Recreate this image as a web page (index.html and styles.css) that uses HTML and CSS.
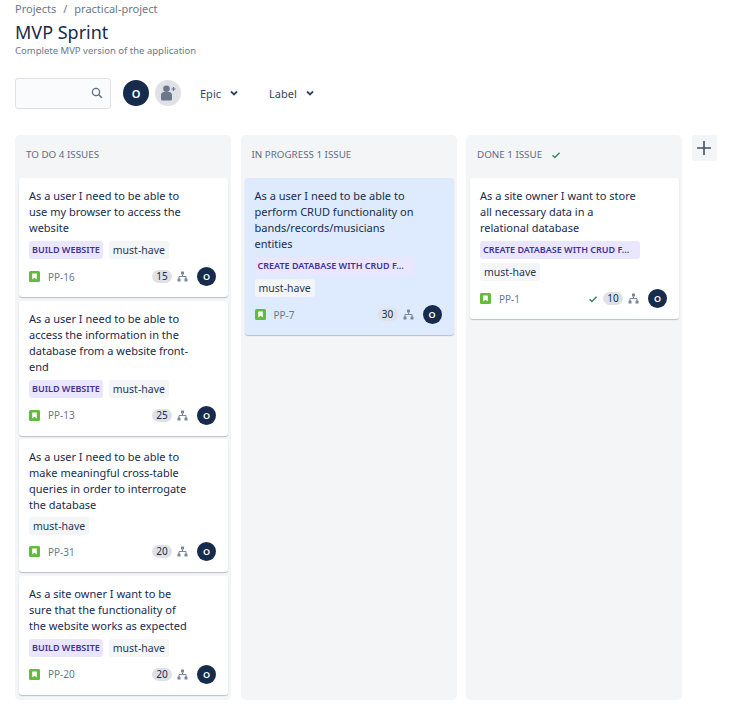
FILE: index.html
```html
<!DOCTYPE html>
<html lang="en">
<head>
    <meta charset="UTF-8">
    <meta name="viewport" content="width=device-width, initial-scale=1.0">
    <title>MVP Sprint</title>
    <link rel="stylesheet" href="styles.css">
</head>
<body>
    <svg class="defs" width="0" height="0">
        <symbol id="story" viewBox="0 0 11 11">
            <rect width="11" height="11" rx="1.5" fill="#63ba3c"/>
            <path d="M3.2 2.5h4.6v6L5.5 6.8 3.2 8.5z" fill="#fff"/>
        </symbol>
        <symbol id="tree" viewBox="0 0 11 11">
            <path d="M5.5 3.5v2M2 8V5.5h7V8" fill="none" stroke="#7a869a" stroke-width="1"/>
            <rect x="4" y="0.5" width="3" height="3" rx="0.5" fill="#7a869a"/>
            <rect x="0.5" y="7.5" width="3" height="3" rx="0.5" fill="#7a869a"/>
            <rect x="7.5" y="7.5" width="3" height="3" rx="0.5" fill="#7a869a"/>
        </symbol>
        <symbol id="tick" viewBox="0 0 10 10">
            <path d="M1.5 5.2l2.4 2.3 4.6-4.8" fill="none" stroke="#36865f" stroke-width="1.4"/>
        </symbol>
        <symbol id="chevron" viewBox="0 0 10 10">
            <path d="M2 3.5l3 3 3-3" fill="none" stroke="#344563" stroke-width="1.8"/>
        </symbol>
    </svg>

    <div class="breadcrumbs"><span>Projects</span><span class="slash">/</span><span>practical-project</span></div>
    <h1>MVP Sprint</h1>
    <p class="subtitle">Complete MVP version of the application</p>

    <div class="toolbar">
        <div class="search">
            <svg width="12" height="12" viewBox="0 0 12 12"><circle cx="5" cy="5" r="3.6" fill="none" stroke="#5e6c84" stroke-width="1.3"/><path d="M7.8 7.8l3 3" stroke="#5e6c84" stroke-width="1.5"/></svg>
        </div>
        <div class="avatar avatar-large">O</div>
        <div class="add-person">
            <svg width="16" height="16" viewBox="0 0 16 16">
                <circle cx="6.5" cy="3.8" r="3.3" fill="#6b778c"/>
                <path d="M1 10c0-2 1.500-3 3-3h5c1.500 0 3 1 3 3v4c0 1-.8 1.500-1.500 1.500h-8C1.800 15.500 1 15 1 14z" fill="#6b778c"/>
                <path d="M13.500 2v4M11.500 4h4" stroke="#6b778c" stroke-width="1.200"/>
            </svg>
        </div>
        <button class="filter filter-epic">Epic <svg width="10" height="10"><use href="#chevron"/></svg></button>
        <button class="filter">Label <svg width="10" height="10"><use href="#chevron"/></svg></button>
    </div>

    <div class="board">
        <section class="column">
            <h2 class="column-title">TO DO 4 ISSUES</h2>
            <div class="cards">
                <article class="card">
                    <p class="summary">As a user I need to be able to use my browser to access the website</p>
                    <div class="tags"><span class="tag epic">BUILD WEBSITE</span><span class="tag label">must-have</span></div>
                    <div class="card-foot">
                        <svg class="story" width="11" height="11"><use href="#story"/></svg><span class="key">PP-16</span>
                        <span class="points">15</span><svg class="tree" width="11" height="11"><use href="#tree"/></svg><span class="avatar">O</span>
                    </div>
                </article>
                <article class="card">
                    <p class="summary">As a user I need to be able to access the information in the database from a website front-end</p>
                    <div class="tags"><span class="tag epic">BUILD WEBSITE</span><span class="tag label">must-have</span></div>
                    <div class="card-foot">
                        <svg class="story" width="11" height="11"><use href="#story"/></svg><span class="key">PP-13</span>
                        <span class="points">25</span><svg class="tree" width="11" height="11"><use href="#tree"/></svg><span class="avatar">O</span>
                    </div>
                </article>
                <article class="card">
                    <p class="summary">As a user I need to be able to make meaningful cross-table queries in order to interrogate the database</p>
                    <div class="tags tags-single"><span class="tag label">must-have</span></div>
                    <div class="card-foot">
                        <svg class="story" width="11" height="11"><use href="#story"/></svg><span class="key">PP-31</span>
                        <span class="points">20</span><svg class="tree" width="11" height="11"><use href="#tree"/></svg><span class="avatar">O</span>
                    </div>
                </article>
                <article class="card">
                    <p class="summary">As a site owner I want to be sure that the functionality of the website works as expected</p>
                    <div class="tags"><span class="tag epic">BUILD WEBSITE</span><span class="tag label">must-have</span></div>
                    <div class="card-foot">
                        <svg class="story" width="11" height="11"><use href="#story"/></svg><span class="key">PP-20</span>
                        <span class="points">20</span><svg class="tree" width="11" height="11"><use href="#tree"/></svg><span class="avatar">O</span>
                    </div>
                </article>
            </div>
        </section>

        <section class="column">
            <h2 class="column-title">IN PROGRESS 1 ISSUE</h2>
            <div class="cards">
                <article class="card selected">
                    <p class="summary">As a user I need to be able to perform CRUD functionality on bands/records/musicians entities</p>
                    <div class="tags"><span class="tag epic epic-long">CREATE DATABASE WITH CRUD F...</span><span class="tag label">must-have</span></div>
                    <div class="card-foot">
                        <svg class="story" width="11" height="11"><use href="#story"/></svg><span class="key">PP-7</span>
                        <span class="points">30</span><svg class="tree" width="11" height="11"><use href="#tree"/></svg><span class="avatar">O</span>
                    </div>
                </article>
            </div>
        </section>

        <section class="column">
            <h2 class="column-title">DONE 1 ISSUE <svg class="title-tick" width="10" height="10"><use href="#tick"/></svg></h2>
            <div class="cards">
                <article class="card">
                    <p class="summary">As a site owner I want to store all necessary data in a relational database</p>
                    <div class="tags"><span class="tag epic epic-long">CREATE DATABASE WITH CRUD F...</span><span class="tag label">must-have</span></div>
                    <div class="card-foot">
                        <svg class="story" width="11" height="11"><use href="#story"/></svg><span class="key">PP-1</span>
                        <svg class="foot-tick" width="10" height="10"><use href="#tick"/></svg><span class="points points-done">10</span><svg class="tree" width="11" height="11"><use href="#tree"/></svg><span class="avatar">O</span>
                    </div>
                </article>
            </div>
        </section>

        <button class="add-column" aria-label="Add column">
            <svg width="16" height="16" viewBox="0 0 16 16"><path d="M8 1v14M1 8h14" stroke="#42526e" stroke-width="1.600"/></svg>
        </button>
    </div>
</body>
</html>
```

FILE: styles.css
```css
body {
    font-family: "Noto Sans", Arial, sans-serif;
    font-size: 11px;
    color: #172b4d;
    margin: 0;
    padding: 0 15px;
    background-color: white;
    height: 719px;
    overflow: hidden;
    box-sizing: border-box;
}
.defs {
    display: block;
}
.breadcrumbs {
    display: flex;
    gap: 7px;
    height: 18px;
    line-height: 18px;
    color: #6b778c;
    font-size: 11px;
}
h1 {
    font-size: 18px;
    font-weight: 400;
    line-height: 26px;
    margin: 1px 0 0;
}
.subtitle {
    font-size: 9.5px;
    line-height: 14px;
    margin: -1px 0 0;
    color: #6b778c;
}
.toolbar {
    display: flex;
    align-items: center;
    height: 32px;
    margin-top: 19px;
}
.search {
    width: 87px;
    height: 29px;
    border: 1px solid #dfe1e6;
    border-radius: 3px;
    background-color: #fafbfc;
    display: flex;
    align-items: center;
    justify-content: flex-end;
    padding-right: 7px;
}
.avatar {
    width: 19px;
    height: 19px;
    border-radius: 50%;
    background-color: #172b4d;
    color: white;
    font-size: 9px;
    font-weight: 600;
    display: flex;
    align-items: center;
    justify-content: center;
}
.avatar-large {
    width: 26px;
    height: 26px;
    font-size: 11px;
    margin-left: 12px;
}
.add-person {
    width: 26px;
    height: 26px;
    border-radius: 50%;
    background-color: #dfe1e6;
    margin-left: 6px;
    display: flex;
    align-items: center;
    justify-content: center;
}
.filter {
    border: none;
    background: none;
    font-family: inherit;
    font-size: 11px;
    color: #344563;
    padding: 0;
    margin-left: 30px;
    display: flex;
    align-items: center;
    gap: 8px;
}
.filter-epic {
    margin-left: 19px;
}
.board {
    display: flex;
    align-items: flex-start;
    gap: 9.5px;
    margin-top: 26px;
}
.column {
    width: 216px;
    height: 565px;
    background-color: #f4f5f7;
    border-radius: 5px;
    flex-shrink: 0;
}
.column-title {
    font-size: 9.8px;
    font-weight: 400;
    color: #5e6c84;
    line-height: 14px;
    margin: 0;
    padding: 13px 11px 16px;
    height: 14px;
    display: flex;
    align-items: center;
}
.title-tick {
    margin-left: 9px;
}
.cards {
    display: flex;
    flex-direction: column;
    gap: 3.5px;
    padding: 0 3px 0 4px;
}
.card {
    background-color: white;
    border-radius: 3px;
    box-shadow: 0 1px 1px rgba(9,30,66,0.25);
    padding: 10px 12px 11px 10px;
}
.selected {
    background-color: #deebff;
}
.summary {
    margin: 0;
    padding-right: 25px;
    line-height: 16px;
    font-size: 11px;
}
.tags {
    display: flex;
    flex-wrap: wrap;
    gap: 4px 6px;
    margin-top: 5px;
}
.tags-single {
    margin-top: 4px;
    margin-bottom: -1px;
}
.tag {
    display: inline-block;
    height: 18px;
    line-height: 18px;
    border-radius: 3px;
    padding: 0 3px;
}
.epic {
    background-color: #eae6ff;
    color: #403294;
    font-size: 9px;
    font-weight: 600;
}
.epic-long {
    width: 154px;
}
.label {
    background-color: #f4f5f7;
    color: #253858;
    font-size: 10.5px;
    padding: 0 4px;
}
.card-foot {
    display: flex;
    align-items: center;
    height: 19px;
    margin-top: 8px;
}
.key {
    color: #6b778c;
    font-size: 10px;
    margin-left: 8px;
    flex-grow: 1;
}
.points {
    background-color: #dfe1e6;
    border-radius: 8px;
    font-size: 10px;
    line-height: 13px;
    padding: 0 4px;
    min-width: 12px;
    text-align: center;
}
.tree {
    margin-left: 5px;
    margin-right: 9px;
}
.foot-tick {
    margin-right: 5px;
}
.add-column {
    width: 25px;
    height: 26px;
    border: none;
    border-radius: 3px;
    background-color: #f4f5f7;
    padding: 0;
    display: flex;
    align-items: center;
    justify-content: center;
    flex-shrink: 0;
}
```
